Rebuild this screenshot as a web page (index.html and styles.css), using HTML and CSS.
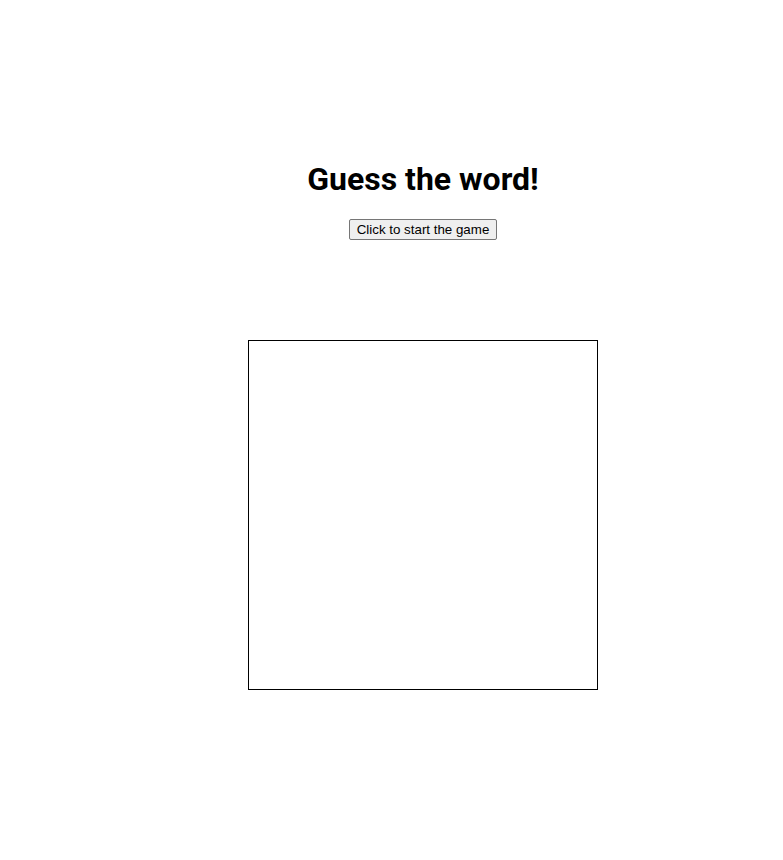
FILE: index.html
```html
<!DOCTYPE html>
<html>
<head>
<meta charset="utf-8">
<link rel="stylesheet" href="styles.css">
</head>
<body>
<main class="page">
  <h1 class="title">Guess the word!</h1>
  <button class="start">Click to start the game</button>
  <div class="board"></div>
</main>
</body>
</html>
```
FILE: styles.css
```css
body {
  margin: 8px;
  background: #fff;
}
.page {
  margin-left: 63px;
  padding-top: 152px;
  display: flex;
  flex-direction: column;
  align-items: center;
}
.title {
  font-family: Roboto, "Noto Sans", sans-serif;
  font-weight: 700;
  font-size: 32px;
  margin: 0 0 21px;
  color: #000;
}
.start {
  font-family: "Liberation Sans", Arial, sans-serif;
  font-size: 13.333px;
  height: 21px;
  padding: 1px 7px;
  border: 1px solid #767676;
  border-radius: 2px;
  background: #efefef;
  color: #000;
}
.board {
  margin-top: 100px;
  width: 348px;
  height: 348px;
  border: 1px solid #000;
}
```
